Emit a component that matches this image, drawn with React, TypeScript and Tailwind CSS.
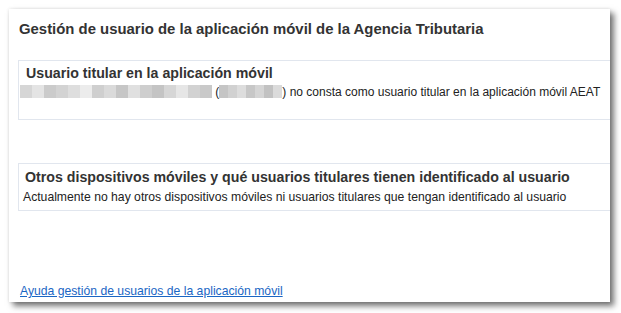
const font = { fontFamily: '"Liberation Sans", Arial, sans-serif' };

const blurA = [
  "#d6d6d6", "#e4e4e4", "#cbcbcb", "#d3d3d3", "#dedede", "#ececec", "#cfcfcf", "#dadada",
  "#c6c6c6", "#e0e0e0", "#cecece", "#c4c4c4", "#d6d6d6", "#e6e6e6", "#d2d2d2", "#c9c9c9",
];
const blurB = ["#c5c5c5", "#d1d1d1", "#dddddd", "#c7c7c7", "#d5d5d5", "#c2c2c2", "#dbdbdb"];

function Redacted({ shades, width }: { shades: string[]; width: number }) {
  return (
    <span
      className="inline-flex h-[13px] align-[-2px] blur-[0.6px]"
      style={{ width }}
    >
      {shades.map((c, i) => (
        <span key={i} className="flex-1 h-full" style={{ background: c }} />
      ))}
    </span>
  );
}

export default function App() {
  return (
    <div className="w-[621px] h-[313px] bg-white pt-[9px] pl-[9px]" style={font}>
      <div className="relative w-[601px] h-[293px] bg-white overflow-hidden shadow-[4px_4px_6px_rgba(0,0,0,0.55),0_0_3px_rgba(0,0,0,0.12)] pl-[10px]">
        <h1 className="pt-[11px] text-[14.9px] leading-[18px] text-[#333] font-semibold">
          Gestión de usuario de la aplicación móvil de la Agencia Tributaria
        </h1>

        <section className="mt-[22px] -ml-[1px] w-[620px] border border-[#e1e6ee] pl-[7px] pt-[3px] h-[60px]">
          <h2 className="text-[14.2px] leading-[18px] font-bold text-[#333]">
            Usuario titular en la aplicación móvil
          </h2>
          <p className="mt-[3px] -ml-[6px] text-[12px] leading-[15px] text-[#222] whitespace-nowrap">
            <Redacted shades={blurA} width={192} /> (
            <Redacted shades={blurB} width={63} />) no consta como usuario titular en la aplicación móvil AEAT
          </p>
        </section>

        <section className="mt-[43px] -ml-[1px] w-[620px] border border-[#e1e6ee] pl-[6px] pt-[4px] h-[48px]">
          <h2 className="text-[14.2px] leading-[18px] font-bold text-[#333]">
            Otros dispositivos móviles y qué usuarios titulares tienen identificado al usuario
          </h2>
          <p className="mt-[4px] -ml-[2px] text-[12.2px] leading-[15px] text-[#222] whitespace-nowrap">
            Actualmente no hay otros dispositivos móviles ni usuarios titulares que tengan identificado al usuario
          </p>
        </section>

        <a
          href="#"
          className="absolute left-[11px] bottom-[3px] text-[12.2px] leading-[15px] text-[#1a66c4] underline"
        >
          Ayuda gestión de usuarios de la aplicación móvil
        </a>
      </div>
    </div>
  );
}
